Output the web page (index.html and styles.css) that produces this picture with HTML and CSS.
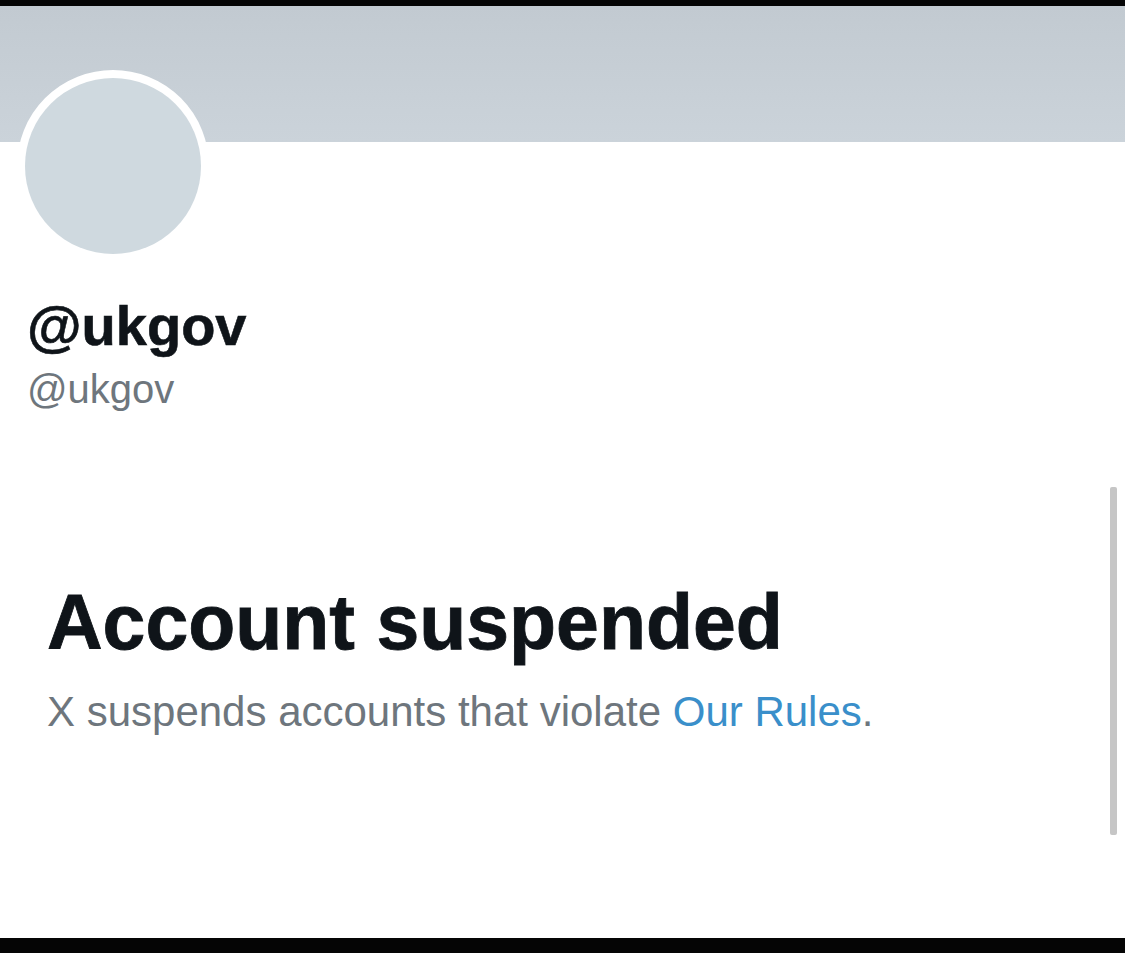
FILE: index.html
```html
<!DOCTYPE html>
<html lang="en">
  <head>
    <meta charset="UTF-8" />
    <meta name="viewport" content="width=device-width, initial-scale=1.0" />
    <title>@ukgov / X</title>
    <link rel="stylesheet" href="styles.css">
  </head>
  <body>
    <div class="screen">
      <div class="top-edge"></div>
      <div class="banner"></div>
      <div class="main">
        <div class="profile">
          <div class="avatar">
            <div class="avatar-inner"></div>
          </div>
          <h1 class="display-name">@ukgov</h1>
          <p class="handle">@ukgov</p>
          <div class="notice">
            <h2>Account suspended</h2>
            <p>X suspends accounts that violate <a href="#">Our Rules</a>.</p>
          </div>
        </div>
        <div class="scroll">
          <div class="scroll-thumb"></div>
        </div>
      </div>
      <div class="bottom-edge"></div>
    </div>
  </body>
</html>
```

FILE: styles.css
```css
body {
  margin: 0;
  padding: 0;
  background-color: #fff;
  font-family: "Liberation Sans", Arial, sans-serif;
}
.screen {
  display: flex;
  flex-direction: column;
  height: 953px;
  overflow: hidden;
}
.top-edge {
  height: 6px;
  background-color: #050505;
}
.banner {
  height: 136px;
  background: linear-gradient(#c2cad1, #cbd3da);
}
.main {
  flex: 1;
  display: flex;
}
.profile {
  flex: 1;
  padding-left: 17px;
}
.avatar {
  width: 176px;
  height: 176px;
  margin-top: -72px;
  border: 8px solid #fff;
  border-radius: 50%;
  background-color: #fff;
}
.avatar-inner {
  width: 100%;
  height: 100%;
  border-radius: 50%;
  background-color: #cfd9df;
}
.display-name {
  margin: 34px 0 0 10px;
  font-size: 56px;
  font-weight: 700;
  line-height: 60px;
  color: #0f1419;
  -webkit-text-stroke: 0.6px #0f1419;
}
.handle {
  margin: 9px 0 0 10px;
  font-size: 40px;
  line-height: 48px;
  color: #6e767d;
}
.notice {
  margin: 167px 0 0 30px;
}
.notice h2 {
  margin: 0;
  font-size: 77px;
  font-weight: 700;
  line-height: 84px;
  color: #0f1419;
  -webkit-text-stroke: 0.8px #0f1419;
}
.notice p {
  margin: 24px 0 0;
  font-size: 42px;
  line-height: 48px;
  color: #6e767d;
}
.notice a {
  color: #3a8fca;
  text-decoration: none;
}
.scroll {
  width: 7px;
  margin-right: 8px;
  padding-top: 345px;
}
.scroll-thumb {
  height: 348px;
  border-radius: 2px;
  background-color: #c6c6c6;
}
.bottom-edge {
  height: 15px;
  background-color: #050505;
}
```
